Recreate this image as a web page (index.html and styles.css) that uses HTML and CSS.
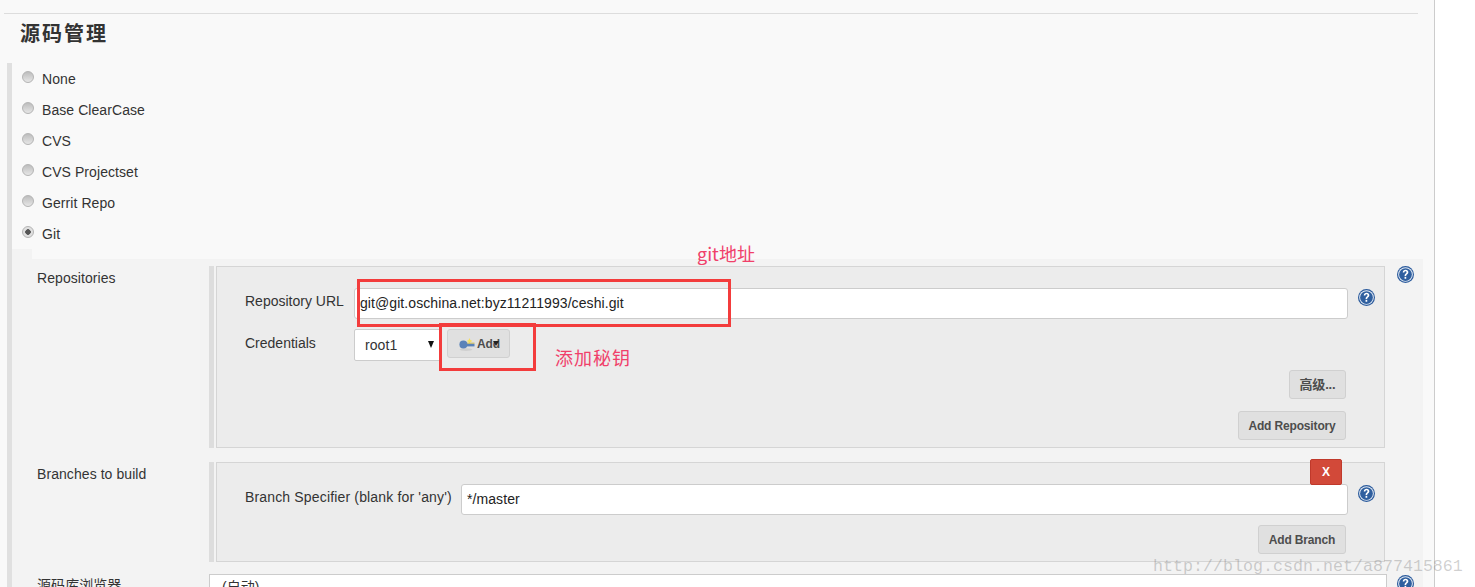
FILE: index.html
```html
<!DOCTYPE html>
<html lang="zh">
<head>
<meta charset="utf-8">
<title>源码管理</title>
<link rel="stylesheet" href="styles.css">
</head>
<body>
<svg class="defs" width="0" height="0" aria-hidden="true">
  <symbol id="help" viewBox="0 0 16 16">
    <circle cx="8" cy="8" r="8" fill="#2a5a9c"/>
    <circle cx="8" cy="8" r="6.9" fill="#e4ebf4"/>
    <circle cx="8" cy="8" r="6" fill="#2f5f9f"/>
    <path d="M5.4 6.1c.1-1.6 1.1-2.5 2.7-2.5 1.5 0 2.6.9 2.6 2.2 0 1.9-2.1 1.9-2.1 3.6H7.1c0-2.3 1.9-2.4 1.9-3.5 0-.5-.4-.9-1-.9s-1 .4-1.1 1.2z" fill="#fff"/>
    <rect x="7.1" y="10.2" width="1.6" height="1.8" fill="#fff"/>
  </symbol>
</svg>
<div class="page">
  <hr class="rule">
  <h2 class="title">源码管理</h2>
  <div class="scm">
    <ul class="radios">
      <li class="radio-row"><span class="radio"></span><span>None</span></li>
      <li class="radio-row"><span class="radio"></span><span>Base ClearCase</span></li>
      <li class="radio-row"><span class="radio"></span><span>CVS</span></li>
      <li class="radio-row"><span class="radio"></span><span>CVS Projectset</span></li>
      <li class="radio-row"><span class="radio"></span><span>Gerrit Repo</span></li>
      <li class="radio-row"><span class="radio checked"></span><span>Git</span></li>
    </ul>
    <div class="notch"></div>
    <div class="git">
      <section class="section sec-repos">
        <div class="sec-label">Repositories</div>
        <div class="bar"></div>
        <div class="box box-repos">
          <div class="field">
            <label class="field-label w-repo">Repository URL</label>
            <div class="input input-wide">git@git.oschina.net:byz11211993/ceshi.git</div>
            <svg class="help"><use href="#help"/></svg>
          </div>
          <div class="cred">
            <label class="field-label w-repo">Credentials</label>
            <div class="select-small">root1<span class="caret"></span></div>
            <button class="btn btn-add">
              <svg class="key" viewBox="0 0 16 14">
                <ellipse cx="7" cy="12.6" rx="6.5" ry="1.3" fill="#cfcfcf"/>
                <path d="M10.5 1l.9 2.1 2.1.9-2.1.9-.9 2.1-.9-2.1-2.1-.9 2.1-.9z" fill="#f6e05e"/>
                <rect x="5" y="5.6" width="10.5" height="1.2" fill="#d9c35a"/>
                <rect x="5" y="6.8" width="10.5" height="2.6" fill="#5a82b8"/>
                <circle cx="4.4" cy="7.6" r="4" fill="#5a82b8"/>
              </svg>
              <span class="add-text">Add</span><span class="add-caret"></span>
            </button>
          </div>
          <div class="actions first"><button class="btn btn-adv">高级...</button></div>
          <div class="actions second"><button class="btn btn-repo">Add Repository</button></div>
        </div>
        <svg class="help help-out"><use href="#help"/></svg>
      </section>
      <section class="section sec-branch">
        <div class="sec-label">Branches to build</div>
        <div class="bar"></div>
        <div class="box box-branch">
          <button class="btn-x">X</button>
          <div class="field">
            <label class="field-label w-branch">Branch Specifier (blank for 'any')</label>
            <div class="input input-branch">*/master</div>
            <svg class="help"><use href="#help"/></svg>
          </div>
          <div class="actions third"><button class="btn btn-branch">Add Branch</button></div>
        </div>
      </section>
      <section class="section sec-browser">
        <div class="sec-label">源码库浏览器</div>
        <div class="select-full">(自动)</div>
        <svg class="help help-browser"><use href="#help"/></svg>
      </section>
    </div>
  </div>
</div>
<div class="mark mark-git"></div>
<div class="mark mark-add"></div>
<div class="note note-git">git地址</div>
<div class="note note-add">添加秘钥</div>
<div class="watermark">http://blog.csdn.net/a877415861</div>
</body>
</html>
```
FILE: styles.css
```css
* { box-sizing: border-box; }
html, body { margin: 0; padding: 0; height: 587px; overflow: hidden; background: #fff; }
body { position: relative; font-family: "Liberation Sans", "Noto Sans CJK SC", sans-serif; font-size: 14px; letter-spacing: .07px; color: #333; }
.defs { position: absolute; }
.page { width: 1435px; height: 587px; background: #f9f9f9; border-right: 1px solid #ccc; overflow: hidden; padding-top: 13px; }
.rule { margin: 0 16px 0 4px; height: 1px; border: 0; background: #ddd; }
.title { margin: 0; padding: 6px 0 0 20px; height: 49px; font-size: 20px; line-height: 26px; font-weight: 700; letter-spacing: 2px; color: #333; font-family: "Noto Sans CJK SC", sans-serif; }
.scm { margin-left: 7px; border-left: 5px solid #e0e0e0; height: 530px; }
.radios { list-style: none; margin: 0; padding: 0; height: 186px; }
.radio-row { display: flex; height: 31px; padding-left: 10px; align-items: flex-start; line-height: 16px; padding-top: 8px; }
.radio { width: 12px; height: 12px; margin: 0 8px 0 0; border-radius: 50%; background: linear-gradient(#bdbdbd, #e6e6e6); border: 1px solid #b4b4b4; }
.radio.checked { background: radial-gradient(circle, #555 0 2.5px, #e0e0e0 3px); }
.notch { width: 20px; height: 10px; background: #f3f3f3; }
.git { background: #f3f3f3; width: 1411px; height: 340px; padding-top: 7px; }
.section { display: flex; align-items: flex-start; position: relative; }
.sec-label { width: 197px; padding: 4px 0 0 25px; line-height: 16px; flex: none; }
.bar { width: 5px; background: #ddd; align-self: stretch; flex: none; margin-right: 2px; }
.box { width: 1169px; background: #ececec; border: 1px solid #d5d5d5; position: relative; flex: none; }
.sec-repos { height: 182px; }
.box-repos { height: 182px; padding-top: 21px; }
.help { width: 17px; height: 17px; flex: none; display: block; }
.help-out { position: absolute; left: 1385px; top: 0; }
.field { display: flex; align-items: flex-start; padding-left: 28px; }
.field-label { line-height: 16px; padding-top: 5px; flex: none; }
.w-repo { width: 109px; letter-spacing: 0; }
.w-branch { width: 216px; letter-spacing: .16px; }
.input { height: 31px; background: #fff; border: 1px solid #ccc; border-radius: 3px; color: #222; line-height: 29px; padding-left: 5px; flex: none; margin-right: 10px; letter-spacing: .08px; }
.input-wide { width: 994px; }
.input-branch { width: 887px; }
.field .help { margin-top: 1px; }
.cred { display: flex; align-items: flex-start; padding-left: 28px; margin-top: 10px; height: 32px; }
.cred .field-label { padding-top: 6px; }
.select-small { width: 87px; height: 32px; background: #fff; border: 1px solid #ccc; border-radius: 2px 0 0 2px; line-height: 30px; padding-left: 10px; position: relative; color: #333; flex: none; }
.caret { position: absolute; right: 6px; top: 11px; border: 3.5px solid transparent; border-top: 7px solid #111; border-bottom: 0; }
.btn { background: #e0e0e0; border: 1px solid #d0d0d0; border-radius: 3px; height: 29px; font: 700 12px/28px "Liberation Sans", "Noto Sans CJK SC", sans-serif; letter-spacing: -.15px; color: #4d4d4d; padding: 0; display: block; }
.btn-add { width: 63px; margin-left: 6px; display: flex; align-items: center; padding-left: 11px; position: relative; }
.key { width: 16px; height: 14px; margin-right: 2px; flex: none; }
.add-text { color: #4d4d4d; }
.add-caret { position: absolute; left: 45px; top: 11px; border: 3px solid transparent; border-top: 5px solid #222; border-bottom: 0; }
.actions { display: flex; justify-content: flex-end; padding-right: 38px; }
.actions.first { margin-top: 9px; }
.actions.second { margin-top: 12px; }
.actions.third { margin-top: 10px; }
.btn-adv { width: 57px; font-size: 13px; }
.btn-repo { width: 108px; }
.btn-branch { width: 88px; }
.sec-branch { margin-top: 14px; height: 100px; }
.box-branch { height: 100px; padding-top: 21px; }
.btn-x { position: absolute; left: 1093px; top: -4px; width: 32px; height: 26px; background: #d24939; border: 1px solid #c0392b; border-radius: 2px; color: #fff; font: 700 12px/24px "Liberation Sans", sans-serif; padding: 0; z-index: 1; }
.sec-browser { margin-top: 12px; height: 30px; }
.sec-browser .sec-label { padding-top: 3px; }
.select-full { width: 1178px; height: 32px; background: #fff; border: 1px solid #ccc; line-height: 20px; padding: 2px 0 0 12px; color: #333; flex: none; }
.help-browser { position: absolute; left: 1385px; top: 1px; }
.mark { position: absolute; border: 3px solid #f33c3c; }
.mark-git { left: 357px; top: 279px; width: 374px; height: 48px; }
.mark-add { left: 439px; top: 323px; width: 97px; height: 48px; }
.note { position: absolute; color: #f0406a; font-size: 18px; line-height: 24px; letter-spacing: 0; font-family: "Noto Sans CJK SC", sans-serif; }
.note-git { left: 697px; top: 241px; }
.note-add { left: 555px; top: 345px; letter-spacing: 1px; }
.watermark { position: absolute; left: 1153px; top: 557px; font: 16.67px/20px "Liberation Mono", monospace; letter-spacing: 0; color: rgba(120,120,120,.35); white-space: nowrap; }
```
